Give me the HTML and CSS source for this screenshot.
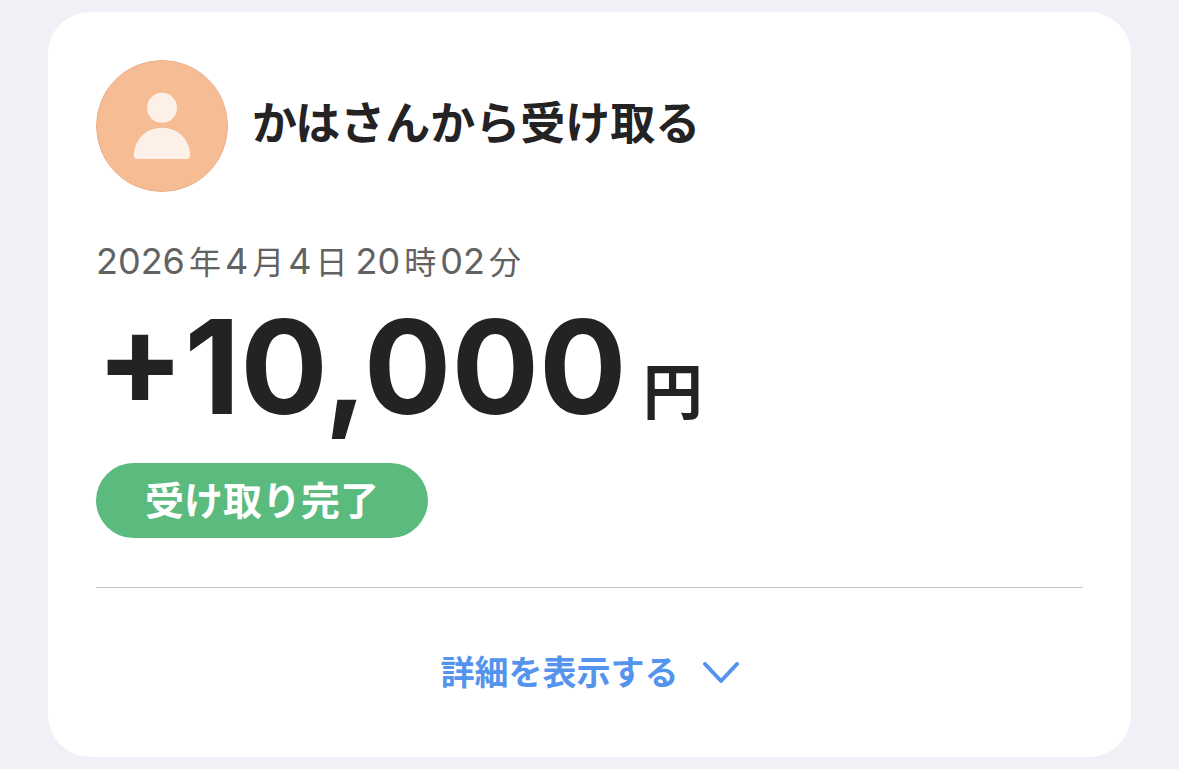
FILE: index.html
```
<!DOCTYPE html>
<html lang="ja">
    <head>
        <meta charset="utf-8">
        <meta name="viewport" content="width=device-width, initial-scale=1">
        <title>かはさんから受け取る</title>
        <link rel="stylesheet" href="styles.css">
    </head>
    <body>
        <main class="card">
            <div class="header">
                <svg class="avatar" viewBox="0 0 132 132" aria-hidden="true">
                    <circle cx="66" cy="66" r="65.5" fill="#f6bc93" stroke="#e9b18d"/>
                    <circle cx="66" cy="47.8" r="15" fill="#fdf0e8"/>
                    <path d="M42 99 Q37.500 99 37.800 94.500 C39 79 50 67.800 66 67.800 C82 67.800 93 79 94.200 94.500 Q94.500 99 90 99 Z" fill="#fdf0e8"/>
                </svg>
                <h1>かはさんから受け取る</h1>
            </div>
            <p class="date">
                <span class="group"><span>2026</span><small>年</small><span>4</span><small>月</small><span>4</span><small>日</small></span>
                <span class="group"><span>20</span><small>時</small><span>02</span><small>分</small></span>
            </p>
            <p class="amount">+10,000<span class="unit">円</span></p>
            <div class="badge">受け取り完了</div>
            <hr>
            <button class="detail" type="button">
                詳細を表示する
                <svg class="chevron" viewBox="0 0 36 22" aria-hidden="true">
                    <path d="M2 2 L18 19 L34 2"/>
                </svg>
            </button>
        </main>
    </body>
</html>
```

FILE: styles.css
```
*{
    box-sizing: border-box;
}

body{
    margin: 0;
    padding: 12px 48px;
    background-color: #eff1f6;
    color: #242223;
    font-family: Inter, "Noto Sans CJK JP", sans-serif;
}

.card{
    padding: 48px 48px 60px;
    border-radius: 42px;
    background-color: #fff;
}

.header{
    display: flex;
    align-items: center;
    gap: 24px;
}

.avatar{
    flex: none;
    width: 132px;
    height: 132px;
}

h1{
    margin: 0;
    padding-bottom: 4px;
    font-size: 45px;
    line-height: 60px;
    font-weight: 700;
}

.date{
    display: flex;
    gap: 8px;
    margin: 47px 0 0;
    color: #626262;
    font-size: 36px;
    line-height: 44px;
}

.group{
    display: flex;
    align-items: baseline;
    gap: 4px;
}

.date small{
    font-size: 32px;
}

.amount{
    display: flex;
    align-items: baseline;
    gap: 16px;
    margin: 16px 0 0;
    font-size: 130px;
    line-height: 132px;
    font-weight: 700;
}

.unit{
    font-size: 60px;
    line-height: 60px;
}

.badge{
    width: fit-content;
    margin-top: 30px;
    padding: 0 49px;
    border-radius: 38px;
    background-color: #5bbb7f;
    color: #fff;
    font-size: 39px;
    line-height: 75px;
    font-weight: 700;
}

hr{
    height: 1px;
    margin: 49px 0 0;
    border: 0;
    background-color: #c4c4c6;
}

.detail{
    display: flex;
    align-items: center;
    gap: 24px;
    margin: 61px auto 0;
    padding: 0;
    border: 0;
    background: none;
    color: #5594ee;
    font-family: inherit;
    font-size: 34px;
    line-height: 48px;
    font-weight: 700;
    cursor: pointer;
}

.chevron{
    width: 36px;
    height: 22px;
    fill: none;
    stroke: currentColor;
    stroke-width: 4;
    stroke-linecap: round;
    stroke-linejoin: round;
}
```
